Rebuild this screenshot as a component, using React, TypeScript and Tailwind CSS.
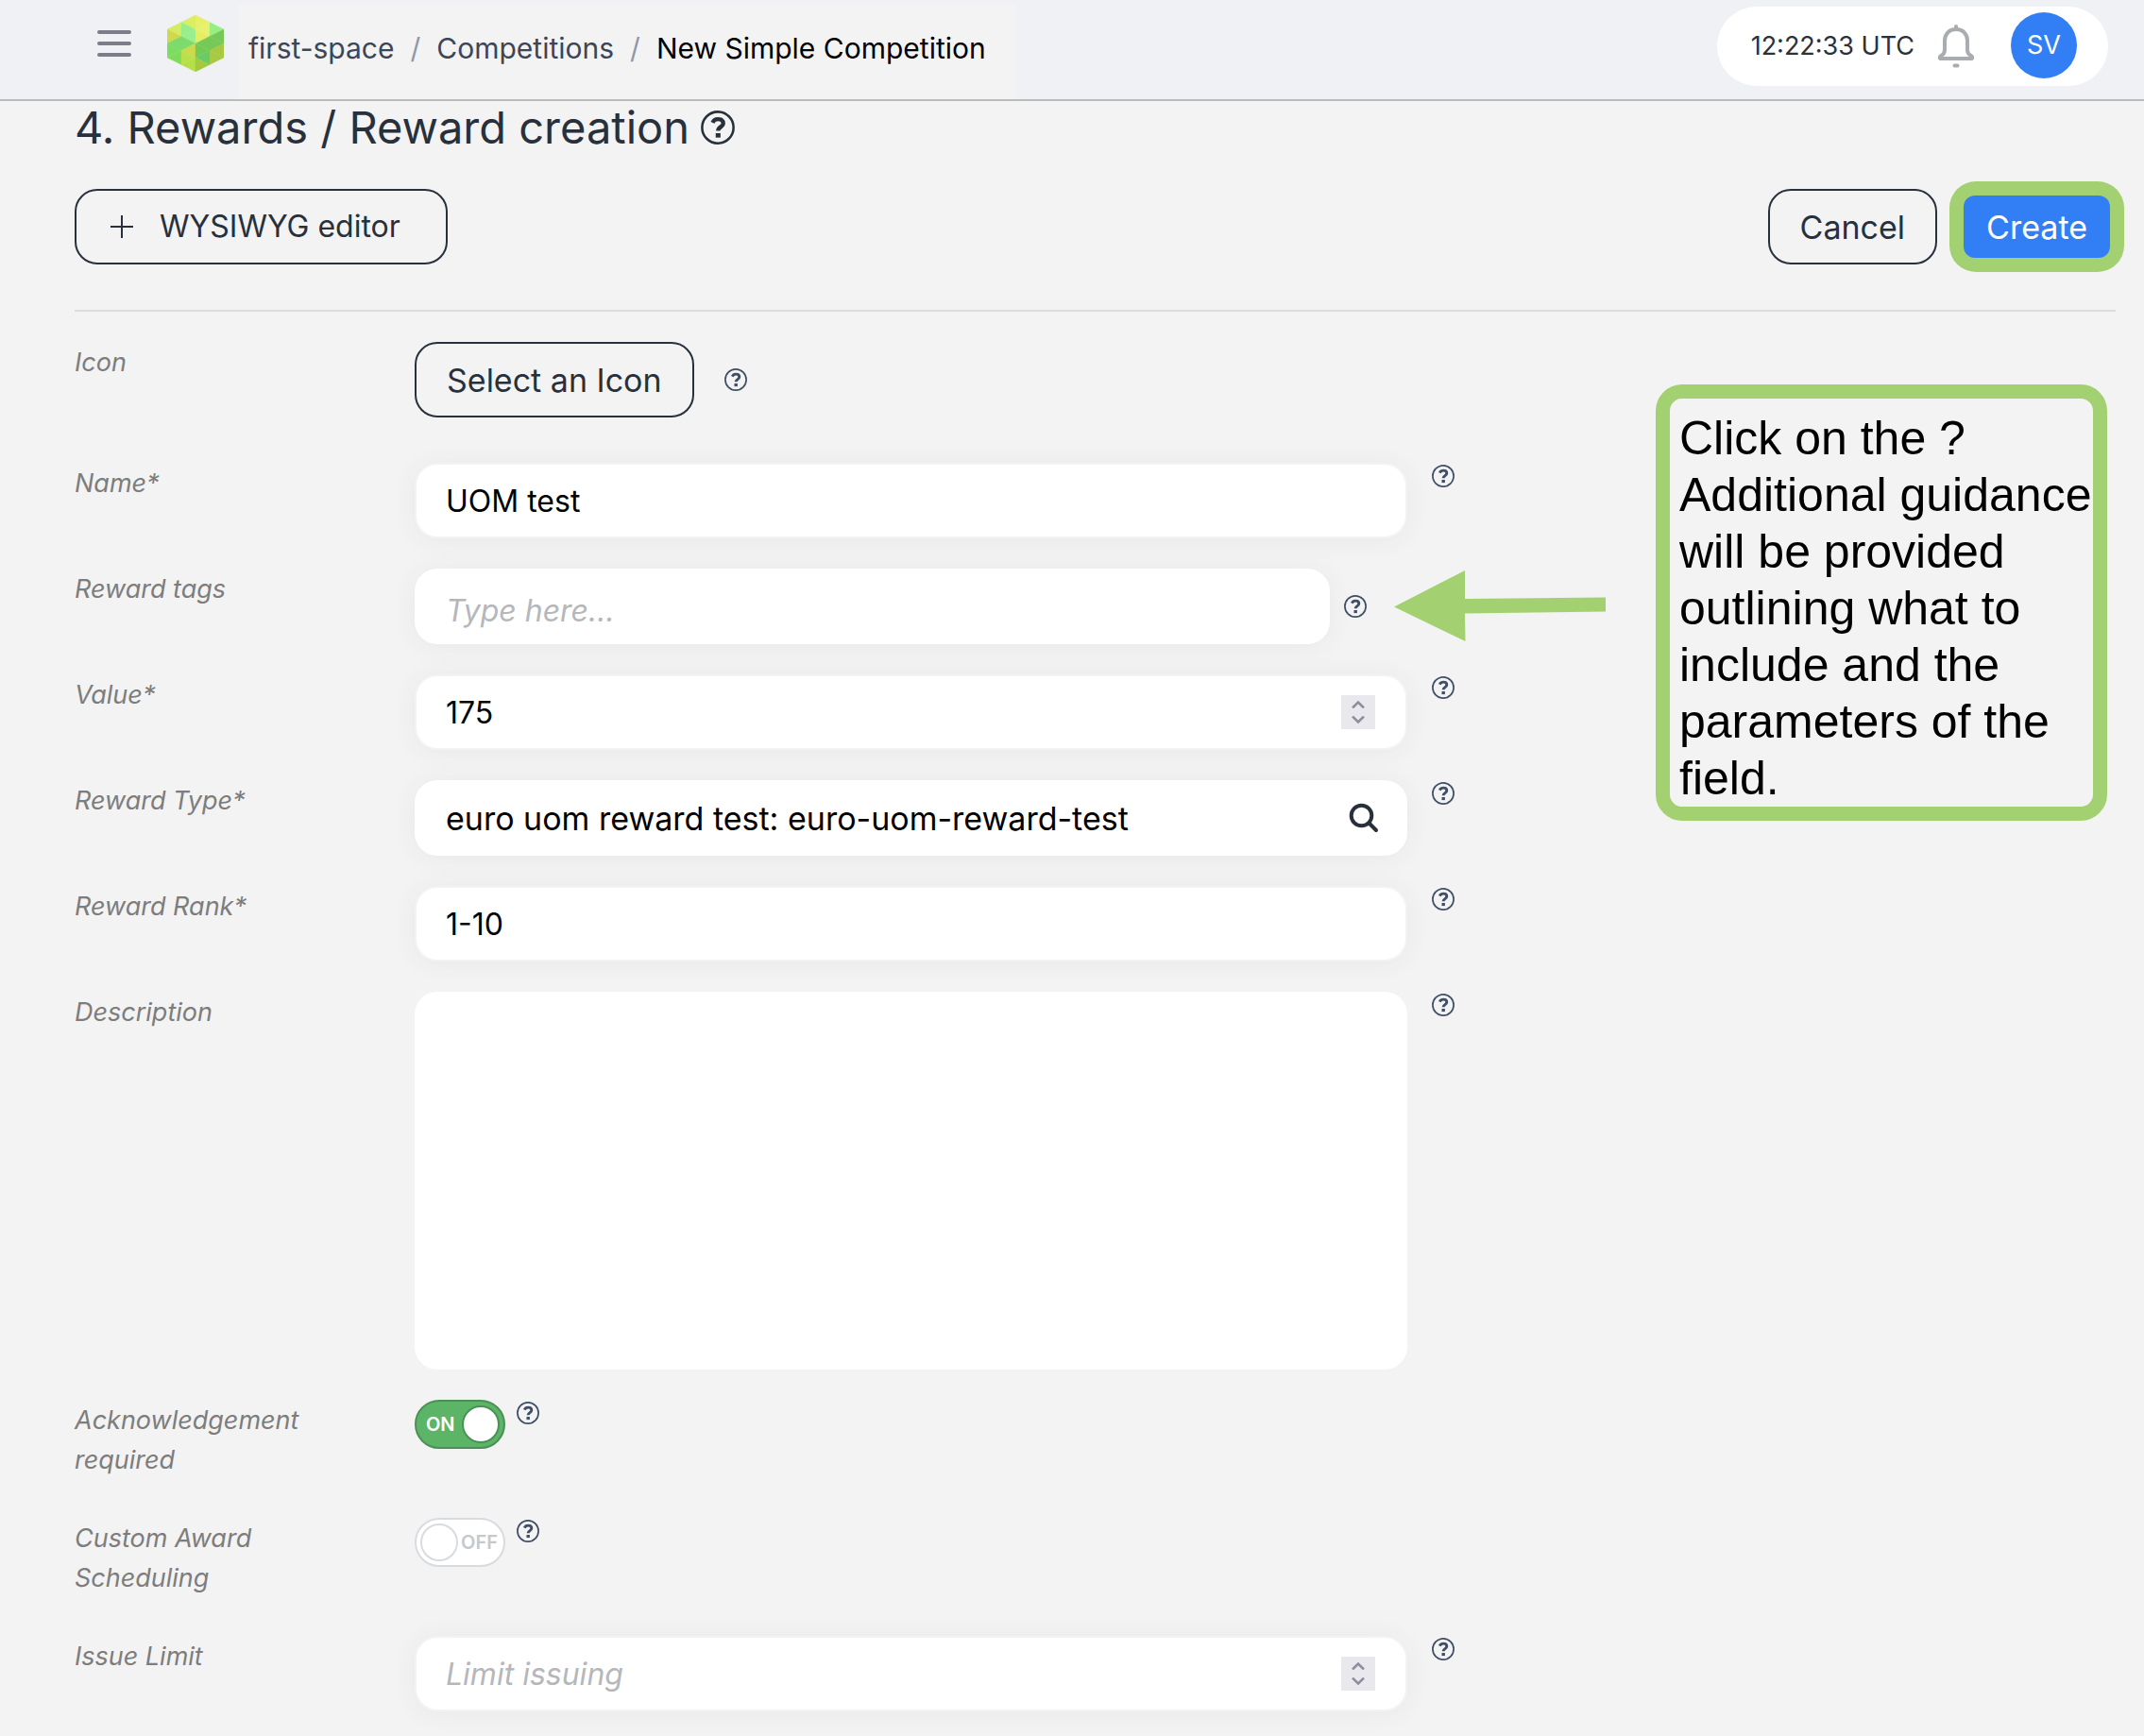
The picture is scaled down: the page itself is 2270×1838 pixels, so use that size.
import type { ReactNode } from "react";

const logoTriangles: [string, string][] = [
  ["0,15 15,7.5 15,22.5", "#d5ec62"],
  ["0,15 0,30 15,22.5", "#d0d84e"],
  ["0,30 15,22.5 15,37.5", "#7cdb6b"],
  ["0,30 0,45 15,37.5", "#7ddc62"],
  ["0,45 15,37.5 15,52.5", "#7fdc5b"],
  ["15,7.5 30,0 30,15", "#d9ee63"],
  ["15,7.5 15,22.5 30,15", "#98ef8a"],
  ["15,22.5 30,15 30,30", "#98ef8e"],
  ["15,22.5 15,37.5 30,30", "#7cdb6b"],
  ["15,37.5 30,30 30,45", "#cbd94c"],
  ["15,37.5 15,52.5 30,45", "#b9df4a"],
  ["15,52.5 30,45 30,60", "#b4df47"],
  ["30,0 30,15 45,7.5", "#e6ef66"],
  ["30,15 45,7.5 45,22.5", "#e8f06c"],
  ["30,15 30,30 45,22.5", "#e3ee62"],
  ["30,30 45,22.5 45,37.5", "#74ca55"],
  ["30,30 30,45 45,37.5", "#74ca55"],
  ["30,45 45,37.5 45,52.5", "#69cb65"],
  ["30,45 30,60 45,52.5", "#a3c93f"],
  ["60,15 45,7.5 45,22.5", "#97ee82"],
  ["60,15 60,30 45,22.5", "#76c957"],
  ["60,30 45,22.5 45,37.5", "#76c957"],
  ["60,30 60,45 45,37.5", "#a8ca42"],
  ["60,45 45,37.5 45,52.5", "#a8ca42"],
];

function Logo() {
  return (
    <svg viewBox="0 0 60 60" className="size-[60px]" aria-hidden="true">
      {logoTriangles.map(([points, fill]) => (
        <polygon key={points} points={points} fill={fill} stroke={fill} strokeWidth="0.3" />
      ))}
    </svg>
  );
}

function HelpGlyph({ className }: { className: string }) {
  return (
    <svg viewBox="0 0 24 24" className={className} fill="none" stroke="currentColor" aria-hidden="true">
      <circle cx="12" cy="12" r="11.1" strokeWidth="1.7" />
      <path d="M8.3 8.6C8.9 7.1 10.2 6.1 12.1 6.1c2.2 0 3.7 1.1 3.7 2.9 0 2.7-3.6 2.5-3.6 5.3" strokeWidth="2.9" />
      <path d="M10.5 16h3.4v3.1h-3.4z" fill="currentColor" stroke="none" />
    </svg>
  );
}

function Help({ label, big = false }: { label: string; big?: boolean }) {
  return (
    <button
      type="button"
      aria-label={label}
      className={big ? "shrink-0 text-[#28313b]" : "shrink-0 text-[#3f4d66]"}
    >
      <HelpGlyph className={big ? "size-9" : "size-6"} />
    </button>
  );
}

function Bell() {
  return (
    <svg viewBox="0 0 40 48" className="h-12 w-10 text-[#a9adb0]" fill="none" stroke="currentColor" strokeWidth="4" strokeLinejoin="round" strokeLinecap="round" aria-hidden="true">
      <path d="M20 3v3" />
      <path d="M20 6C12.3 6 8 11.5 8 18v9c0 3.8-.6 5.2-2.8 6.3-1.7.9-2.4 1.5-2.4 2.6 0 .7.5 1.1 1.2 1.1h32c.7 0 1.2-.4 1.2-1.1 0-1.100-.7-1.700-2.400-2.600C32.600 32.200 32 30.800 32 27v-9C32 11.500 27.700 6 20 6z" />
      <path d="M18.500 44.500h3" />
    </svg>
  );
}

function Arrow() {
  return (
    <svg viewBox="0 0 224 76" className="h-[76px] w-[224px] max-w-none" fill="#a3d171" aria-hidden="true">
      <polygon points="0,38.500 75,0 75,30 224,28.500 224,43.500 75,45.500 75.500,75" />
    </svg>
  );
}

const fieldBox =
  "flex h-20 min-w-0 flex-1 items-center rounded-3xl bg-white pl-[31px] pr-6 shadow-[0_2px_28px_rgba(110,70,70,0.06)] border-2";
const fieldText =
  "h-full min-w-0 flex-1 bg-transparent text-black outline-none placeholder:italic placeholder:text-[#b5b7bb]";

function Stepper({ name }: { name: string }) {
  return (
    <div className="mr-2 flex size-9 shrink-0 flex-col items-center justify-center gap-2 bg-[#e8e8ed] text-[#8f8d9c]">
      <button type="button" aria-label={`Increase ${name}`}>
        <svg viewBox="0 0 14 8" className="h-2 w-[14px]" fill="none" stroke="currentColor" strokeWidth="2.500" aria-hidden="true">
          <path d="M1 7.500l6-6 6 6" />
        </svg>
      </button>
      <button type="button" aria-label={`Decrease ${name}`}>
        <svg viewBox="0 0 14 8" className="h-2 w-[14px]" fill="none" stroke="currentColor" strokeWidth="2.500" aria-hidden="true">
          <path d="M1 .5l6 6 6-6" />
        </svg>
      </button>
    </div>
  );
}

function Row({ id, label, children }: { id: string; label: string; children: ReactNode }) {
  return (
    <div className="flex items-start">
      <label htmlFor={id} className="w-[360px] shrink-0 pt-px pr-20 text-[27px] leading-[42px] text-[#7d7d7d] italic">
        {label}
      </label>
      <div className="flex min-w-0 flex-1 items-start">{children}</div>
    </div>
  );
}

function RowHelp({ label }: { label: string }) {
  return (
    <div className="ml-[26px] flex pt-[2px]">
      <Help label={`Help: ${label}`} />
    </div>
  );
}

function TextRow({ id, label, value, placeholder, numeric }: { id: string; label: string; value?: string; placeholder?: string; numeric?: boolean }) {
  return (
    <Row id={id} label={label}>
      <div className={`${fieldBox} border-[#f4f3f4]`}>
        <input
          id={id}
          type="text"
          inputMode={numeric ? "numeric" : "text"}
          defaultValue={value}
          placeholder={placeholder}
          className={`${fieldText} text-[32px]`}
        />
        {numeric && <Stepper name={label} />}
      </div>
      <RowHelp label={label} />
    </Row>
  );
}

function Toggle({ id, on }: { id: string; on: boolean }) {
  return (
    <span className="relative flex h-[52px] w-24 shrink-0">
      <input
        id={id}
        type="checkbox"
        role="switch"
        defaultChecked={on}
        className="peer size-full appearance-none rounded-full border-2 border-[#d8dbe0] bg-white checked:border-[#4a9156] checked:bg-[#5cb567]"
      />
      <span className="pointer-events-none absolute top-[6px] left-[6px] size-10 rounded-full border-2 border-[#d8dbe0] bg-white peer-checked:left-[50px] peer-checked:border-[#4a9156]" />
      <span
        className={
          on
            ? "pointer-events-none absolute inset-y-0 left-3 flex items-center text-[20px] font-semibold text-white"
            : "pointer-events-none absolute inset-y-0 right-2 flex items-center text-[20px] font-semibold text-[#c5c8cf]"
        }
      >
        {on ? "ON" : "OFF"}
      </span>
    </span>
  );
}

function ToggleRow({ id, label, on }: { id: string; label: string; on: boolean }) {
  return (
    <div className="pb-2">
      <Row id={id} label={label}>
        <Toggle id={id} on={on} />
        <div className="ml-3 flex pt-[2px]">
          <Help label={`Help: ${label}`} />
        </div>
      </Row>
    </div>
  );
}

function Header() {
  return (
    <header className="flex h-[107px] items-stretch justify-between border-b-2 border-[#b9bcbf] bg-[#f0f1f4] pr-[38px] pl-[103px]">
      <div className="flex">
        <button type="button" aria-label="Menu" className="mt-8 flex h-7 w-9 flex-col justify-between">
          <span className="h-1 w-full rounded-full bg-[#7f7c8a]" />
          <span className="h-1 w-full rounded-full bg-[#7f7c8a]" />
          <span className="h-1 w-full rounded-full bg-[#7f7c8a]" />
        </button>
        <a href="#home" aria-label="Home" className="mt-4 ml-[38px]">
          <Logo />
        </a>
        <nav aria-label="Breadcrumb" className="mt-[5px] ml-4 flex items-start bg-[#f3f3f3] pt-6 pr-8 pl-[10px] text-[30px] leading-[44px] text-[#3d4656]">
          <ol className="flex items-center gap-[17px]">
            <li><a href="#space">first-space</a></li>
            <li aria-hidden="true" className="text-[#8f98a8]">/</li>
            <li><a href="#competitions">Competitions</a></li>
            <li aria-hidden="true" className="text-[#8f98a8]">/</li>
            <li className="text-black" aria-current="page">New Simple Competition</li>
          </ol>
        </nav>
      </div>
      <div className="mt-[7px] flex h-[84px] items-center rounded-full bg-white pr-[33px] pl-9">
        <time className="text-[27px] text-[#2a323b]">12:22:33 UTC</time>
        <button type="button" aria-label="Notifications" className="ml-6">
          <Bell />
        </button>
        <button type="button" aria-label="Account" className="mb-[2px] ml-[38px] size-[70px] rounded-full bg-[#327ff5] text-[27px] text-white">
          SV
        </button>
      </div>
    </header>
  );
}

export default function App() {
  return (
    <div className="min-h-screen overflow-x-hidden bg-[#f3f3f3] pb-6 font-['Inter',sans-serif]">
      <Header />
      <main className="pr-[30px] pl-[79px]">
        <div className="flex items-center gap-3 text-[#28313b]">
          <h1 className="text-[47px] leading-[56px]">4. Rewards / Reward creation</h1>
          <Help label="Help: Reward creation" big />
        </div>

        <div className="mt-[37px] flex items-center justify-between">
          <button type="button" className="flex h-20 items-center rounded-3xl border-2 border-[#28303b] pr-12 pl-9 text-[32px] text-[#28313b]">
            <svg viewBox="0 0 24 24" className="mr-7 size-6" fill="none" stroke="currentColor" strokeWidth="2" aria-hidden="true">
              <path d="M12 0v24M0 12h24" />
            </svg>
            WYSIWYG editor
          </button>
          <div className="-my-2 -mr-[9px] flex items-center gap-[13px]">
            <button type="button" className="h-20 rounded-3xl border-2 border-[#28303b] px-8 text-[34px] text-[#28313b]">
              Cancel
            </button>
            <div className="rounded-[28px] bg-[#a3d171] p-[15px]">
              <button type="button" className="block h-[66px] rounded-xl bg-[#327ff5] px-6 text-[34px] text-white">
                Create
              </button>
            </div>
          </div>
        </div>

        <hr className="mt-12 border-t-2 border-[#d9dde0]" />

        <div className="mt-8 flex items-start justify-between">
          <form className="flex max-w-[1461px] min-w-0 flex-1 flex-col gap-8">
            <div className="pb-4">
              <Row id="icon" label="Icon">
                <div className="flex items-center gap-8">
                  <button id="icon" type="button" className="h-20 rounded-3xl border-2 border-[#28303b] px-8 text-[34px] text-[#28313b]">
                    Select an Icon
                  </button>
                  <Help label="Help: Icon" />
                </div>
              </Row>
            </div>

            <TextRow id="name" label="Name*" value="UOM test" />

            <Row id="tags" label="Reward tags">
              <div className="flex min-w-0 flex-1 items-center">
                <div className={`${fieldBox} border-white`}>
                  <input id="tags" type="text" placeholder="Type here..." className={`${fieldText} pt-2 text-[32px]`} />
                </div>
                <div className="ml-[15px] flex">
                  <Help label="Help: Reward tags" />
                </div>
                <div className="w-[93px] shrink-0 pl-[29px]">
                  <Arrow />
                </div>
              </div>
            </Row>

            <TextRow id="value" label="Value*" value="175" numeric />

            <Row id="type" label="Reward Type*">
              <div className={`${fieldBox} border-white`}>
                <input id="type" type="text" defaultValue="euro uom reward test: euro-uom-reward-test" className={`${fieldText} text-[34px]`} />
                <button type="button" aria-label="Search reward types" className="mr-1 shrink-0 text-[#28313b]">
                  <svg viewBox="0 0 32 32" className="size-8" fill="none" stroke="currentColor" strokeWidth="4" strokeLinecap="round" aria-hidden="true">
                    <circle cx="13.500" cy="13.500" r="10.800" />
                    <path d="M21.500 21.500l7.500 7.500" />
                  </svg>
                </button>
              </div>
              <RowHelp label="Reward Type" />
            </Row>

            <TextRow id="rank" label="Reward Rank*" value="1-10" />

            <Row id="description" label="Description">
              <textarea
                id="description"
                className="h-[400px] min-w-0 flex-1 resize-none rounded-3xl bg-white px-8 py-5 text-[32px] text-black outline-none"
              />
              <RowHelp label="Description" />
            </Row>

            <ToggleRow id="acknowledgement" label="Acknowledgement required" on />
            <ToggleRow id="scheduling" label="Custom Award Scheduling" on={false} />

            <TextRow id="limit" label="Issue Limit" placeholder="Limit issuing" numeric />
          </form>

          <aside className="mt-[45px] mr-[9px] w-[478px] shrink-0 rounded-[28px] border-[15px] border-[#a3d171] pt-3 pl-[10px] font-['Liberation_Sans',sans-serif] text-[50px] leading-[60px] text-black">
            <p>Click on the ? Additional guidance will be provided outlining what to include and the parameters of the field.</p>
          </aside>
        </div>
      </main>
    </div>
  );
}
